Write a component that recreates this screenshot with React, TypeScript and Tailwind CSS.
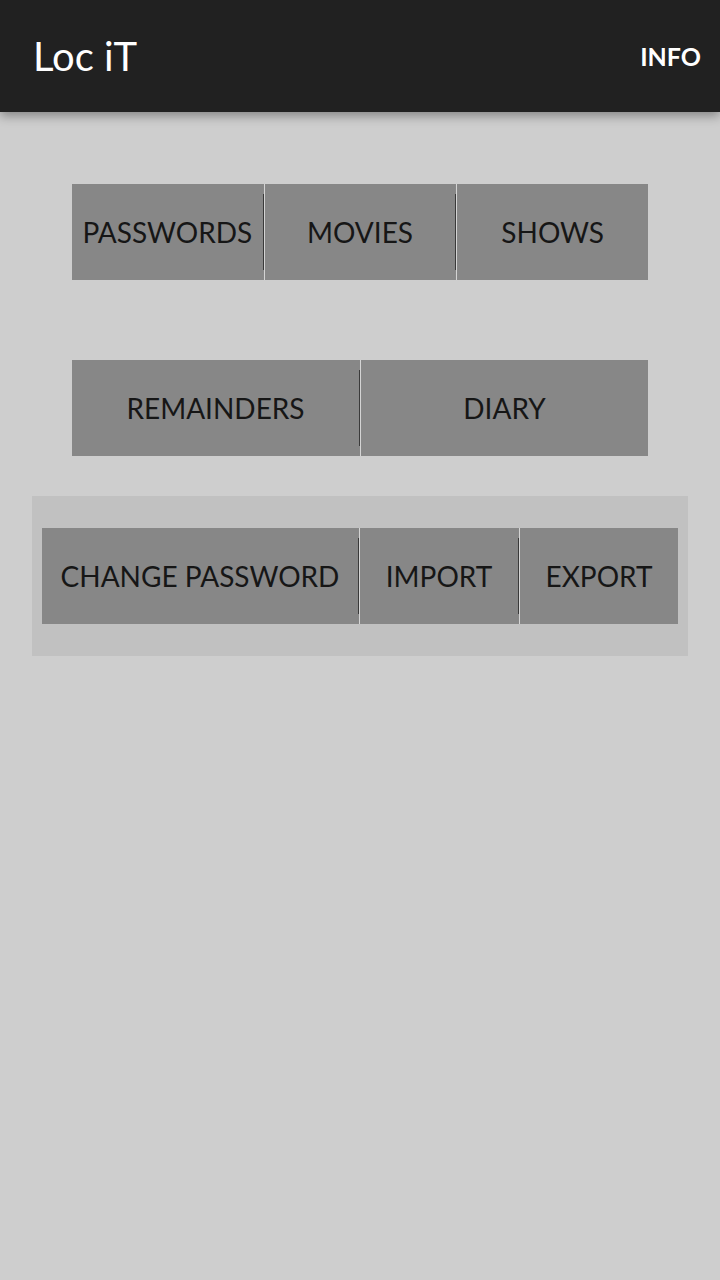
import React from "react";

const font = { fontFamily: "Lato, 'Open Sans', sans-serif" };

function Divider() {
  return (
    <div className="flex items-stretch">
      <div className="w-px my-[10px] bg-[#3a3a3a]" />
      <div className="w-px bg-[#d4d4d4]" />
    </div>
  );
}

function ButtonBar({ items, className }: { items: { label: string; grow: string }[]; className: string }) {
  return (
    <div className={`flex h-[96px] bg-[#878787] ${className}`}>
      {items.map((item, i) => (
        <React.Fragment key={item.label}>
          {i > 0 && <Divider />}
          <button className={`${item.grow} min-w-0 flex items-center justify-center text-[28px] text-[#161616] whitespace-nowrap`}>
            {item.label}
          </button>
        </React.Fragment>
      ))}
    </div>
  );
}

export default function App() {
  return (
    <main className="min-h-[1280px] bg-[#cecece]" style={font}>
      <header className="relative z-10 h-[112px] bg-[#212121] flex items-center justify-between pl-[33px] pr-[19px] shadow-[0_4px_10px_rgba(0,0,0,0.35)]">
        <h1 className="text-[40px] text-white leading-none">Loc iT</h1>
        <span className="text-[25px] font-bold text-white leading-none">INFO</span>
      </header>

      <section className="pt-[72px]">
        <ButtonBar
          className="mx-[72px]"
          items={[
            { label: "PASSWORDS", grow: "flex-1" },
            { label: "MOVIES", grow: "flex-1" },
            { label: "SHOWS", grow: "flex-1" },
          ]}
        />
        <ButtonBar
          className="mx-[72px] mt-[80px]"
          items={[
            { label: "REMAINDERS", grow: "flex-1" },
            { label: "DIARY", grow: "flex-1" },
          ]}
        />
        <div className="mx-[32px] mt-[40px] bg-[#c1c1c1] px-[10px] py-[32px]">
          <ButtonBar
            className=""
            items={[
              { label: "CHANGE PASSWORD", grow: "flex-[2]" },
              { label: "IMPORT", grow: "flex-1" },
              { label: "EXPORT", grow: "flex-1" },
            ]}
          />
        </div>
      </section>
    </main>
  );
}
